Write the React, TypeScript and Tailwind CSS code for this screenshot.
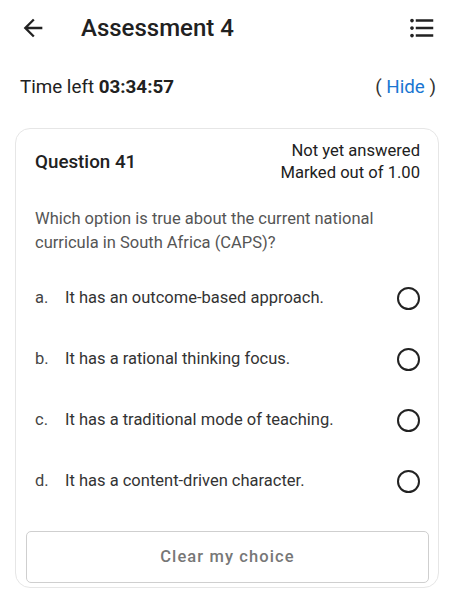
import { useState } from "react";

const options = [
  { key: "a.", text: "It has an outcome-based approach." },
  { key: "b.", text: "It has a rational thinking focus." },
  { key: "c.", text: "It has a traditional mode of teaching." },
  { key: "d.", text: "It has a content-driven character." },
];

function BackIcon() {
  return (
    <svg width="28" height="28" viewBox="0 0 24 24" fill="#222">
      <path d="M20 11H7.83l5.59-5.59L12 4l-8 8 8 8 1.41-1.41L7.83 13H20v-2z" />
    </svg>
  );
}

function ListIcon() {
  return (
    <svg width="30" height="30" viewBox="0 0 24 24" fill="#222">
      <path d="M4 10.5c-.83 0-1.5.67-1.5 1.5s.67 1.5 1.5 1.5 1.5-.67 1.5-1.5-.67-1.5-1.5-1.5zm0-6c-.83 0-1.5.67-1.5 1.5S3.17 7.5 4 7.5 5.5 6.83 5.5 6 4.83 4.5 4 4.5zm0 12c-.83 0-1.5.68-1.5 1.5s.68 1.5 1.5 1.5 1.5-.68 1.5-1.5-.67-1.5-1.5-1.5zM7 19h14v-2H7v2zm0-6h14v-2H7v2zm0-8v2h14V5H7z" />
    </svg>
  );
}

export default function App() {
  const [choice, setChoice] = useState<string | null>(null);
  return (
    <div className="min-h-screen w-full bg-white text-[#212121]" style={{ fontFamily: "Roboto, 'Liberation Sans', sans-serif" }}>
      <div className="flex items-center h-[56px] pl-[19px] pr-[17px]">
        <BackIcon />
        <div className="ml-[34px] text-[24px] font-medium flex-1">Assessment 4</div>
        <ListIcon />
      </div>
      <div className="flex items-center justify-between pl-5 pr-[18px] pt-[17px] text-[18.8px]">
        <div>
          Time left <span className="font-bold">03:34:57</span>
        </div>
        <div className="text-[#333]">
          ( <span className="text-[#1976d2]">Hide</span> )
        </div>
      </div>
      <div className="mx-[15px] mt-[27px] border border-[#e6e6e6] rounded-[15px] pl-[19px] pr-[18px] pt-[11px] pb-[4px]">
        <div className="flex items-center justify-between">
          <div className="text-[18.8px] font-medium">Question 41</div>
          <div className="text-right text-[16.6px] leading-[22px]">
            <div>Not yet answered</div>
            <div>Marked out of 1.00</div>
          </div>
        </div>
        <div className="mt-[23px] text-[16.5px] leading-[24px] text-[#555]">
          Which option is true about the current national curricula in South Africa (CAPS)?
        </div>
        <div className="mt-[13px]">
          {options.map((o) => (
            <button
              key={o.key}
              onClick={() => setChoice(o.key)}
              className="flex w-full items-center h-[61px] text-left text-[16.5px] text-[#333]"
            >
              <span className="w-[30px] text-[#444]">{o.key}</span>
              <span className="flex-1">{o.text}</span>
              <span className="w-[23px] h-[23px] rounded-full border-[2px] border-[#222] flex items-center justify-center">
                {choice === o.key && <span className="w-[11px] h-[11px] rounded-full bg-[#222]" />}
              </span>
            </button>
          ))}
        </div>
        <button
          onClick={() => setChoice(null)}
          className="mt-[19px] -ml-[9px] w-[calc(100%+18px)] h-[52px] border border-[#cfcfcf] rounded-[5px] text-[16.5px] font-medium tracking-[1.1px] text-[#777]"
        >
          Clear my choice
        </button>
      </div>
    </div>
  );
}
